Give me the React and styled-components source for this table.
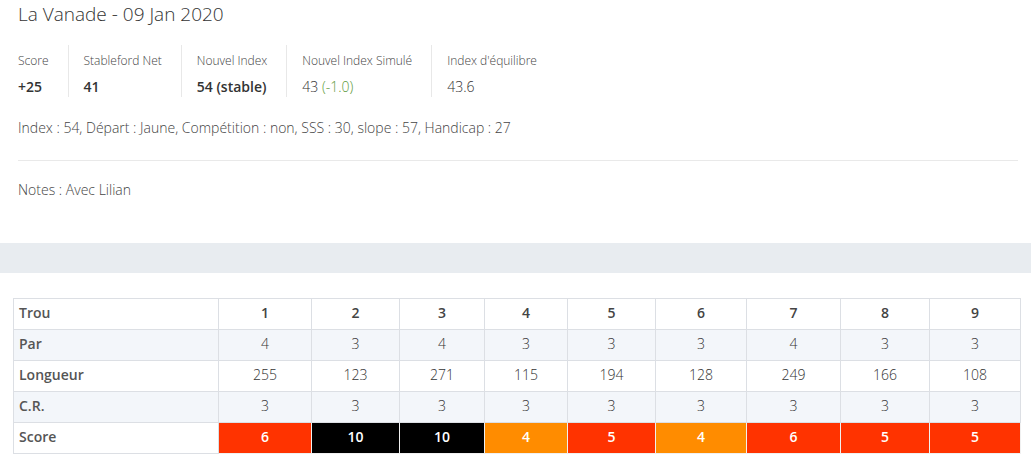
import React from "react";
import styled, { createGlobalStyle } from "styled-components";

const Global = createGlobalStyle`
  html, body { margin: 0; padding: 0; background: #fff; }
  body { font-family: "Open Sans", Roboto, "Liberation Sans", sans-serif; color: #333; font-weight: 300; }
  * { box-sizing: border-box; }
`;

const Page = styled.div`
  width: 1031px;
  height: 460px;
  overflow: hidden;
`;

const Section = styled.div`
  padding: 0 13px 0 18px;
`;

const Title = styled.h1`
  margin: 0;
  font-size: 19px;
  font-weight: 300;
  line-height: 28px;
  color: #333;
`;

const Stats = styled.div`
  display: flex;
  margin-top: 17px;
`;

const Stat = styled.div`
  padding: 6px 19px 0 15px;
  height: 52px;
  border-left: 1px solid #e8e8e8;
  &:first-child { padding-left: 0; border-left: none; }
`;

const StatLabel = styled.div`
  font-size: 12px;
  line-height: 20px;
  color: #444;
`;

const StatValue = styled.div`
  margin-top: 6px;
  font-size: 14px;
  line-height: 20px;
  font-weight: ${(p) => (p.$bold ? 600 : 300)};
  color: #333;
`;

const Delta = styled.span`
  color: #5d9a3c;
`;

const Info = styled.div`
  margin-top: 21px;
  font-size: 14px;
  line-height: 20px;
  color: #444;
`;

const Rule = styled.hr`
  margin: 22px 0 0;
  border: none;
  border-top: 1px solid #e9e9e9;
`;

const Notes = styled.div`
  margin-top: 19px;
  font-size: 14px;
  line-height: 20px;
  color: #444;
`;

const Band = styled.div`
  margin-top: 43px;
  height: 30px;
  background: #e8ecf0;
`;

const TableWrap = styled.div`
  padding: 25px 0 0 13px;
`;

const Table = styled.table`
  border-collapse: collapse;
  table-layout: fixed;
  width: 1008px;
  font-size: 14px;
`;

const Row = styled.tr`
  background: ${(p) => (p.$alt ? "#f3f6fa" : "#fff")};
`;

const Cell = styled.td`
  height: 31px;
  padding: 0 0 3px;
  border: 1px solid #dcdfe4;
  text-align: center;
  color: #333;
  font-weight: 300;
`;

const Label = styled(Cell)`
  text-align: left;
  padding-left: 5px;
  font-weight: 600;
  color: #555;
`;

const Head = styled(Cell)`
  font-weight: 600;
  color: #444;
`;

const scoreColors = { red: "#ff3300", black: "#000000", orange: "#ff8c00" };

const ScoreCell = styled(Cell)`
  background: ${(p) => scoreColors[p.$tone]};
  color: #fff;
  font-weight: 600;
  border-color: #f0f0f0;
`;

const widths = [205, 93, 88, 85, 83, 88, 91, 94, 89, 91];
const Col = styled.col``;

const holes = [1, 2, 3, 4, 5, 6, 7, 8, 9];
const par = [4, 3, 4, 3, 3, 3, 4, 3, 3];
const length = [255, 123, 271, 115, 194, 128, 249, 166, 108];
const cr = [3, 3, 3, 3, 3, 3, 3, 3, 3];
const score = [6, 10, 10, 4, 5, 4, 6, 5, 5];

const tone = (s, p) => {
  const d = s - p;
  if (d >= 5) return "black";
  if (d >= 2) return "red";
  return "orange";
};

export default function App() {
  return (
    <Page>
      <Global />
      <Section>
        <Title>La Vanade - 09 Jan 2020</Title>
        <Stats>
          <Stat>
            <StatLabel>Score</StatLabel>
            <StatValue $bold>+25</StatValue>
          </Stat>
          <Stat>
            <StatLabel>Stableford Net</StatLabel>
            <StatValue $bold>41</StatValue>
          </Stat>
          <Stat>
            <StatLabel>Nouvel Index</StatLabel>
            <StatValue $bold>54 (stable)</StatValue>
          </Stat>
          <Stat>
            <StatLabel>Nouvel Index Simulé</StatLabel>
            <StatValue>
              43 <Delta>(-1.0)</Delta>
            </StatValue>
          </Stat>
          <Stat>
            <StatLabel>Index d'équilibre</StatLabel>
            <StatValue>43.6</StatValue>
          </Stat>
        </Stats>
        <Info>
          Index : 54, Départ : Jaune, Compétition : non, SSS : 30, slope : 57, Handicap : 27
        </Info>
        <Rule />
        <Notes>Notes : Avec Lilian</Notes>
      </Section>
      <Band />
      <TableWrap>
        <Table>
          <colgroup>
            {widths.map((w, i) => (
              <Col key={i} style={{ width: w }} />
            ))}
          </colgroup>
          <tbody>
            <Row>
              <Label>Trou</Label>
              {holes.map((h) => (
                <Head key={h}>{h}</Head>
              ))}
            </Row>
            <Row $alt>
              <Label>Par</Label>
              {par.map((v, i) => (
                <Cell key={i}>{v}</Cell>
              ))}
            </Row>
            <Row>
              <Label>Longueur</Label>
              {length.map((v, i) => (
                <Cell key={i}>{v}</Cell>
              ))}
            </Row>
            <Row $alt>
              <Label>C.R.</Label>
              {cr.map((v, i) => (
                <Cell key={i}>{v}</Cell>
              ))}
            </Row>
            <Row>
              <Label>Score</Label>
              {score.map((v, i) => (
                <ScoreCell key={i} $tone={tone(v, par[i])}>
                  {v}
                </ScoreCell>
              ))}
            </Row>
          </tbody>
        </Table>
      </TableWrap>
    </Page>
  );
}
